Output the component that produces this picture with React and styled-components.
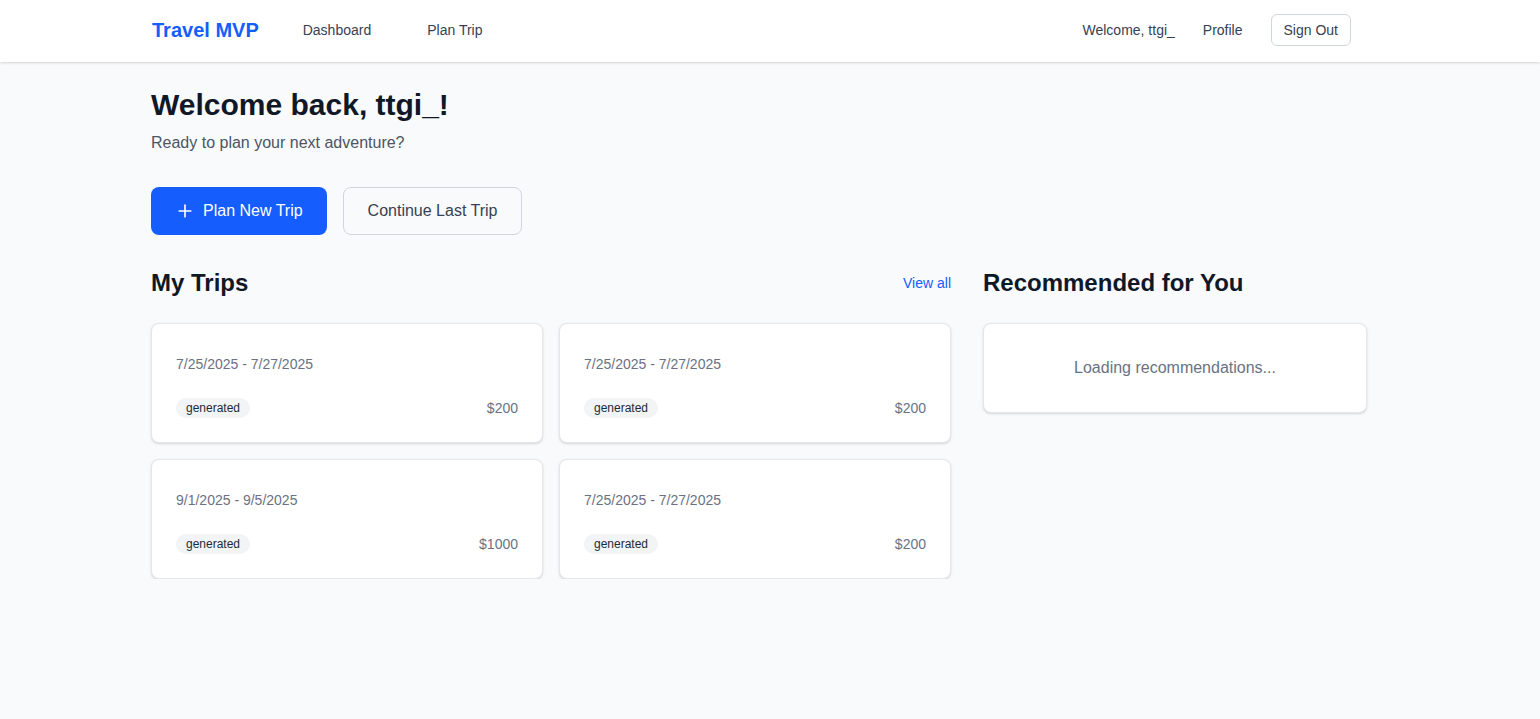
import React from "react";
import styled, { createGlobalStyle } from "styled-components";
import { Plus } from "lucide-react";

const GlobalStyle = createGlobalStyle`
  * { box-sizing: border-box; }
  body {
    margin: 0;
    background: #f9fafb;
    font-family: "Liberation Sans", Arial, sans-serif;
    color: #101828;
  }
`;

const trips = [
  { id: 1, dates: "7/25/2025 - 7/27/2025", status: "generated", budget: "$200" },
  { id: 2, dates: "7/25/2025 - 7/27/2025", status: "generated", budget: "$200" },
  { id: 3, dates: "9/1/2025 - 9/5/2025", status: "generated", budget: "$1000" },
  { id: 4, dates: "7/25/2025 - 7/27/2025", status: "generated", budget: "$200" },
];

function App() {
  return (
    <>
      <GlobalStyle />
      <Header>
        <NavInner>
          <NavLeft>
            <Brand>Travel MVP</Brand>
            <NavLinks>
              <NavLink href="#">Dashboard</NavLink>
              <NavLink href="#">Plan Trip</NavLink>
            </NavLinks>
          </NavLeft>
          <NavRight>
            <UserName>Welcome, ttgi_</UserName>
            <NavLink href="#">Profile</NavLink>
            <SignOut>Sign Out</SignOut>
          </NavRight>
        </NavInner>
      </Header>

      <Main>
        <Title>Welcome back, ttgi_!</Title>
        <Subtitle>Ready to plan your next adventure?</Subtitle>

        <Actions>
          <PrimaryButton>
            <Plus size={20} strokeWidth={2} />
            Plan New Trip
          </PrimaryButton>
          <SecondaryButton>Continue Last Trip</SecondaryButton>
        </Actions>

        <Columns>
          <section>
            <SectionHead>
              <SectionTitle>My Trips</SectionTitle>
              <ViewAll href="#">View all</ViewAll>
            </SectionHead>
            <TripGrid>
              {trips.map((t) => (
                <TripCard key={t.id}>
                  <TripName />
                  <TripDates>{t.dates}</TripDates>
                  <TripFooter>
                    <Status>{t.status}</Status>
                    <Budget>{t.budget}</Budget>
                  </TripFooter>
                </TripCard>
              ))}
            </TripGrid>
          </section>
          <section>
            <SectionHead>
              <SectionTitle>Recommended for You</SectionTitle>
            </SectionHead>
            <LoadingCard>Loading recommendations...</LoadingCard>
          </section>
        </Columns>
      </Main>
    </>
  );
}

export default App;

const Header = styled.header`
  background: #fff;
  height: 62px;
  box-shadow: 0 1px 3px rgba(0, 0, 0, 0.1), 0 1px 2px rgba(0, 0, 0, 0.06);
`;

const NavInner = styled.nav`
  width: 1199px;
  margin-left: 152px;
  height: 60px;
  display: flex;
  align-items: center;
  justify-content: space-between;
`;

const NavLeft = styled.div`
  display: flex;
  align-items: center;
`;

const Brand = styled.div`
  font-size: 20px;
  font-weight: 700;
  color: #155dfc;
  line-height: 28px;
`;

const NavLinks = styled.div`
  display: flex;
  gap: 32px;
  margin-left: 32px;
`;

const NavLink = styled.a`
  padding: 8px 12px;
  font-size: 14px;
  line-height: 20px;
  color: #364153;
  text-decoration: none;
`;

const NavRight = styled.div`
  display: flex;
  align-items: center;
  gap: 16px;
`;

const UserName = styled.span`
  font-size: 14px;
  line-height: 20px;
  color: #364153;
`;

const SignOut = styled.button`
  height: 32px;
  padding: 0 12px;
  font-family: inherit;
  font-size: 14px;
  color: #364153;
  background: #fff;
  border: 1px solid #d1d5dc;
  border-radius: 6px;
`;

const Main = styled.main`
  width: 1216px;
  margin-left: 151px;
  padding-top: 25px;
`;

const Title = styled.h1`
  margin: 0 0 8px;
  font-size: 30px;
  line-height: 36px;
  font-weight: 700;
  color: #101828;
`;

const Subtitle = styled.p`
  margin: 0 0 32px;
  font-size: 16px;
  line-height: 24px;
  color: #4a5565;
`;

const Actions = styled.div`
  display: flex;
  gap: 16px;
  margin-bottom: 32px;
`;

const PrimaryButton = styled.button`
  display: flex;
  align-items: center;
  gap: 8px;
  height: 48px;
  padding: 0 24px;
  border: none;
  border-radius: 8px;
  background: #155dfc;
  color: #fff;
  font-family: inherit;
  font-size: 16px;
`;

const SecondaryButton = styled.button`
  height: 48px;
  padding: 0 24px;
  border: 1px solid #d1d5dc;
  border-radius: 8px;
  background: #f9fafb;
  color: #364153;
  font-family: inherit;
  font-size: 16px;
`;

const Columns = styled.div`
  display: grid;
  grid-template-columns: 800px 384px;
  gap: 32px;
`;

const SectionHead = styled.div`
  display: flex;
  align-items: center;
  justify-content: space-between;
  margin-bottom: 24px;
`;

const SectionTitle = styled.h2`
  margin: 0;
  font-size: 24px;
  line-height: 32px;
  font-weight: 700;
  color: #101828;
`;

const ViewAll = styled.a`
  font-size: 14px;
  color: #155dfc;
  text-decoration: none;
`;

const TripGrid = styled.div`
  display: grid;
  grid-template-columns: 1fr 1fr;
  gap: 16px;
`;

const Card = styled.div`
  background: #fff;
  border: 1px solid #e5e7eb;
  border-radius: 8px;
  box-shadow: 0 1px 3px rgba(0, 0, 0, 0.1), 0 1px 2px rgba(0, 0, 0, 0.06);
`;

const TripCard = styled(Card)`
  padding: 24px;
`;

const TripName = styled.h3`
  margin: 0 0 6px;
  height: 0;
`;

const TripDates = styled.p`
  margin: 0 0 24px;
  font-size: 14px;
  line-height: 20px;
  color: #6a7282;
`;

const TripFooter = styled.div`
  display: flex;
  align-items: center;
  justify-content: space-between;
`;

const Status = styled.span`
  padding: 2px 10px;
  border-radius: 9999px;
  background: #f3f4f6;
  font-size: 12px;
  line-height: 16px;
  color: #1e2939;
`;

const Budget = styled.span`
  font-size: 14px;
  line-height: 20px;
  color: #6a7282;
`;

const LoadingCard = styled(Card)`
  padding: 32px;
  text-align: center;
  font-size: 16px;
  line-height: 24px;
  color: #6a7282;
`;
